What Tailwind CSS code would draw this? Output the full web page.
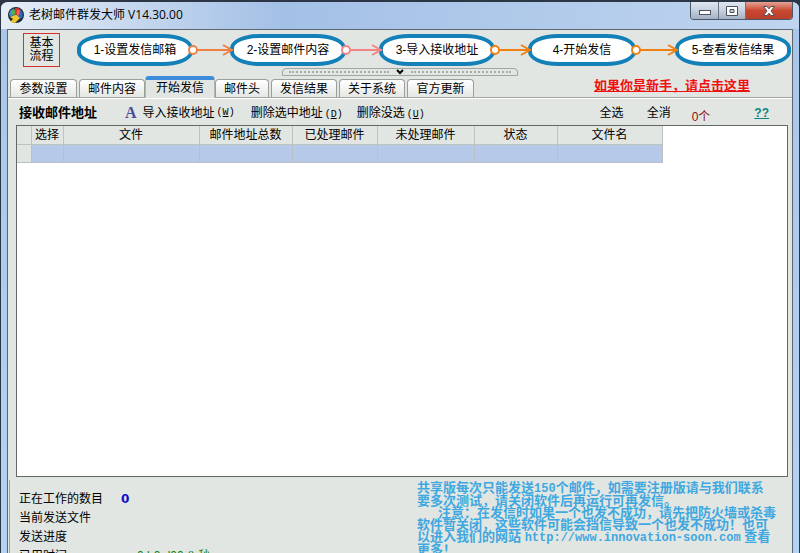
<!DOCTYPE html>
<html lang="zh-CN">
<head>
    <meta charset="UTF-8">
    <meta name="viewport" content="width=device-width, initial-scale=1.0">
    <title>老树邮件群发大师 V14.30.00</title>
    <script src="https://cdn.jsdelivr.net/npm/@tailwindcss/browser@4"></script>
</head>
<body class="h-screen overflow-hidden bg-[#2c3644] font-['Liberation_Sans','Noto_Sans_CJK_SC',sans-serif] text-xs text-black">
    <!-- Window -->
    <div class="flex h-full flex-col overflow-hidden rounded-t-lg border-x border-t-2 border-[#2c3644] bg-linear-to-b from-[#a9c6ea] to-[#b4d2f3]">
        <!-- Title Bar -->
        <header class="flex h-[27px] shrink-0 items-start justify-between bg-linear-to-r from-[#e6edf5] via-[#a3c0e6] via-35% to-[#bfd5ef] px-[6px]">
            <div class="flex items-center gap-1 pt-[3px]">
                <svg class="size-[18px]" viewBox="0 0 18 18">
                    <circle cx="9" cy="9" r="8" fill="#1d2a3a"/>
                    <path d="M2 8A7 7 0 0 1 7 2.500L8 8 3 11Z" fill="#3f8fd0"/>
                    <path d="M4 5L7 3 9 7 6 10Z" fill="#56b04a"/>
                    <path d="M8 2A7 7 0 0 1 14 4L12 10 8 8Z" fill="#e0382e"/>
                    <path d="M13.500 4A7 7 0 0 1 15 12L11 13 11 8Z" fill="#2f66b5"/>
                    <path d="M10 5L13 4 12 9 10 10Z" fill="#f0665a"/>
                    <path d="M3 11L9 8.500 13 12 8 17 3 16 6 13Z" fill="#f2c52b"/>
                </svg>
                <h1 class="font-['Open_Sans','Noto_Sans_CJK_SC',sans-serif] text-xs leading-5">老树邮件群发大师 V14.30.00</h1>
            </div>
            <div class="flex h-[18px] overflow-hidden rounded-b border border-t-0 border-[#4b5668]">
                <button aria-label="最小化" class="flex w-7 items-center justify-center border-r border-[#6a7688] bg-linear-to-b from-[#dfe7f0] via-[#c9d3e0] via-45% to-[#a3b1c5]">
                    <svg class="h-3 w-3.5" viewBox="0 0 14 12"><rect x="1.500" y="5.500" width="11" height="4" fill="#fff" stroke="#4b5363"/></svg>
                </button>
                <button aria-label="最大化" class="flex w-[27px] items-center justify-center border-r border-[#6a7688] bg-linear-to-b from-[#dfe7f0] via-[#c9d3e0] via-45% to-[#a3b1c5]">
                    <svg class="h-3 w-3.5" viewBox="0 0 14 12"><path d="M1.500 1.500h11v9h-11zM5 4.500v3h4v-3z" fill="#fff" fill-rule="evenodd" stroke="#4b5363"/></svg>
                </button>
                <button aria-label="关闭" class="flex w-[46px] items-center justify-center bg-linear-to-b from-[#e3a294] via-[#c9472f] via-50% to-[#b8402c]">
                    <svg class="h-3 w-3.5" viewBox="0 0 14 12"><path d="M1.500 1.500H5L7 3.800 9 1.500h3.500L9 6l3.500 4.500H9L7 8.200 5 10.500H1.500L5 6z" fill="#fff" stroke="#5a4a52"/></svg>
                </button>
            </div>
        </header>

        <!-- Client Area -->
        <main class="mx-[6px] flex min-h-0 flex-1 flex-col border-x border-t border-[#5d6670] bg-[#e2e6e2]">
            <!-- Flow Steps -->
            <nav class="flex h-[38px] shrink-0 items-center pt-0.5 pl-[15px]">
                <div class="mr-[17px] flex h-[34px] w-[37px] items-center justify-center border border-[#d9302c] text-center leading-[13px]">基本<br>流程</div>
                <button class="h-8 w-[116px] rounded-[30px/14px] border-4 border-[#1380b8] bg-white whitespace-nowrap">1-设置发信邮箱</button>
                <svg class="z-10 -mx-[5px] h-3 w-[47px]" viewBox="0 0 47 12" fill="none" stroke="#ee8044" stroke-width="2"><circle cx="5" cy="6" r="4" fill="#fff"/><path d="M9 6h35M35 1l9 5-9 5"/></svg>
                <button class="h-8 w-[116px] rounded-[30px/14px] border-4 border-[#1380b8] bg-white whitespace-nowrap">2-设置邮件内容</button>
                <svg class="z-10 -mx-[5px] h-3 w-[43px]" viewBox="0 0 43 12" fill="none" stroke="#f48484" stroke-width="2"><circle cx="5" cy="6" r="4" fill="#fff"/><path d="M9 6h31M31 1l9 5-9 5"/></svg>
                <button class="h-8 w-[116px] rounded-[30px/14px] border-4 border-[#1380b8] bg-white whitespace-nowrap">3-导入接收地址</button>
                <svg class="z-10 -mx-[5px] h-3 w-[43px]" viewBox="0 0 43 12" fill="none" stroke="#f08010" stroke-width="2"><circle cx="5" cy="6" r="4" fill="#fff"/><path d="M9 6h31M31 1l9 5-9 5"/></svg>
                <button class="h-8 w-[108px] rounded-[30px/14px] border-4 border-[#1380b8] bg-white whitespace-nowrap">4-开始发信</button>
                <svg class="z-10 -mx-[5px] h-3 w-[49px]" viewBox="0 0 49 12" fill="none" stroke="#f08010" stroke-width="2"><circle cx="5" cy="6" r="4" fill="#fff"/><path d="M9 6h37M37 1l9 5-9 5"/></svg>
                <button class="h-8 w-[116px] rounded-[30px/14px] border-4 border-[#1380b8] bg-white whitespace-nowrap">5-查看发信结果</button>
            </nav>

            <!-- Splitter -->
            <button aria-label="收起" class="flex h-2 w-[236px] shrink-0 items-center justify-between self-center rounded-t border border-[#a2a6a2] px-1.5">
                <span class="w-[100px] border-t-2 border-dotted border-[#a9ada9]"></span>
                <svg class="h-1.5 w-2" viewBox="0 0 8 6" fill="none" stroke="#000" stroke-width="2"><path d="M1 1l3 3 3-3"/></svg>
                <span class="w-[100px] border-t-2 border-dotted border-[#a9ada9]"></span>
            </button>

            <!-- Tabs -->
            <div class="flex h-[22px] shrink-0 items-end border-b border-[#a3a7a3] pl-0.5">
                <div class="flex items-end gap-0.5 leading-4">
                    <button class="h-[18px] w-[67px] rounded-t border border-b-0 border-[#9b9f9b] bg-linear-to-b from-white to-[#e4e7e4]">参数设置</button>
                    <button class="h-[18px] w-[66px] rounded-t border border-b-0 border-[#9b9f9b] bg-linear-to-b from-white to-[#e4e7e4]">邮件内容</button>
                    <button class="-mx-0.5 -mb-px h-[22px] w-[70px] rounded-t border-x border-t-4 border-x-[#b3b7b3] border-t-[#3e8ddd] bg-[#e2e6e2] pb-1">开始发信</button>
                    <button class="h-[18px] w-[54px] rounded-t border border-b-0 border-[#9b9f9b] bg-linear-to-b from-white to-[#e4e7e4]">邮件头</button>
                    <button class="h-[18px] w-[66px] rounded-t border border-b-0 border-[#9b9f9b] bg-linear-to-b from-white to-[#e4e7e4]">发信结果</button>
                    <button class="h-[18px] w-[66px] rounded-t border border-b-0 border-[#9b9f9b] bg-linear-to-b from-white to-[#e4e7e4]">关于系统</button>
                    <button class="h-[18px] w-[67px] rounded-t border border-b-0 border-[#9b9f9b] bg-linear-to-b from-white to-[#e4e7e4]">官方更新</button>
                </div>
                <a href="#" class="mr-[42px] ml-auto self-start text-[13px] leading-5 font-bold text-[#f01010] underline">如果你是新手，请点击这里</a>
            </div>

            <!-- Toolbar -->
            <div class="flex h-[27px] shrink-0 items-center border-t border-white pt-0.5 pl-[11px] pr-[23px] whitespace-nowrap">
                <h2 class="mr-7 text-[13px] font-bold">接收邮件地址</h2>
                <button class="mr-4 flex items-center"><span class="mr-1.5 font-['Liberation_Serif',serif] text-base leading-4 font-bold text-[#484c98]">A</span>导入接收地址<span class="ml-0.5 font-['Liberation_Mono',monospace] text-[10px]">(<u>W</u>)</span></button>
                <button class="mr-3.5">删除选中地址<span class="ml-0.5 font-['Liberation_Mono',monospace] text-[10px]">(<u>D</u>)</span></button>
                <button>删除没选<span class="ml-0.5 font-['Liberation_Mono',monospace] text-[10px]">(<u>U</u>)</span></button>
                <div class="ml-auto flex items-center">
                    <button class="mr-[23px]">全选</button>
                    <button class="mr-[21px]">全消</button>
                    <span class="mr-11 pt-2 text-xs leading-4 text-[#8c1010]">0个</span>
                    <a href="#" class="text-xs font-bold text-[#0f8484] underline">??</a>
                </div>
            </div>

            <!-- Address Grid -->
            <div class="mr-1 ml-2 min-h-0 flex-1 border border-[#636863] bg-white">
                <table class="w-[645px] table-fixed border-collapse leading-4">
                    <colgroup>
                        <col class="w-[14px]"><col class="w-8"><col class="w-[136px]"><col class="w-[93px]"><col class="w-[85px]"><col class="w-[97px]"><col class="w-[83px]"><col class="w-[105px]">
                    </colgroup>
                    <thead>
                        <tr class="h-[18px] bg-[#e2e6e2] *:border-r *:border-b *:border-[#bfc3bf] *:p-0 *:pt-px *:font-normal">
                            <th></th>
                            <th>选择</th>
                            <th>文件</th>
                            <th>邮件地址总数</th>
                            <th>已处理邮件</th>
                            <th>未处理邮件</th>
                            <th>状态</th>
                            <th>文件名</th>
                        </tr>
                    </thead>
                    <tbody>
                        <tr class="h-[18px] bg-[#b6c9e9] *:border-r *:border-b *:border-[#bcc0c4] *:p-0">
                            <td class="bg-[#e2e6e2]"></td>
                            <td></td>
                            <td></td>
                            <td></td>
                            <td></td>
                            <td></td>
                            <td></td>
                            <td></td>
                        </tr>
                    </tbody>
                </table>
            </div>

            <!-- Status -->
            <footer class="mt-[3px] ml-px flex h-[73px] shrink-0 items-start overflow-hidden border-l border-[#a3a7a3]">
                <dl class="grid w-[407px] shrink-0 grid-cols-[102px_1fr] pt-2.5 pl-[9px] leading-[19px]">
                    <dt>正在工作的数目</dt>
                    <dd class="font-['DejaVu_Sans',sans-serif] font-bold text-[#1010c8]">0</dd>
                    <dt>当前发送文件</dt>
                    <dd></dd>
                    <dt>发送进度</dt>
                    <dd></dd>
                    <dt>已用时间</dt>
                    <dd class="pl-4 text-[#108010]">0 h0 d00 () 秒</dd>
                </dl>
                <p class="pt-0.5 text-[13px] leading-3 font-bold whitespace-nowrap text-[#40a8e0]">
                    共享版每次只能发送<span class="font-['Liberation_Mono',monospace] text-xs leading-3">150</span>个邮件，如需要注册版请与我们联系<br>
                    要多次测试，请关闭软件后再运行可再发信。<br>
                    <span class="pl-[21px]">注意：在发信时如果一个也发不成功，请先把防火墙或杀毒</span><br>
                    软件暂关闭，这些软件可能会挡信导致一个也发不成功！也可<br>
                    以进入我们的网站 <span class="font-['Liberation_Mono',monospace] text-xs leading-3">http://www.innovation-soon.com</span> 查看<br>
                    更多！
                </p>
            </footer>
        </main>
    </div>
</body>
</html>
